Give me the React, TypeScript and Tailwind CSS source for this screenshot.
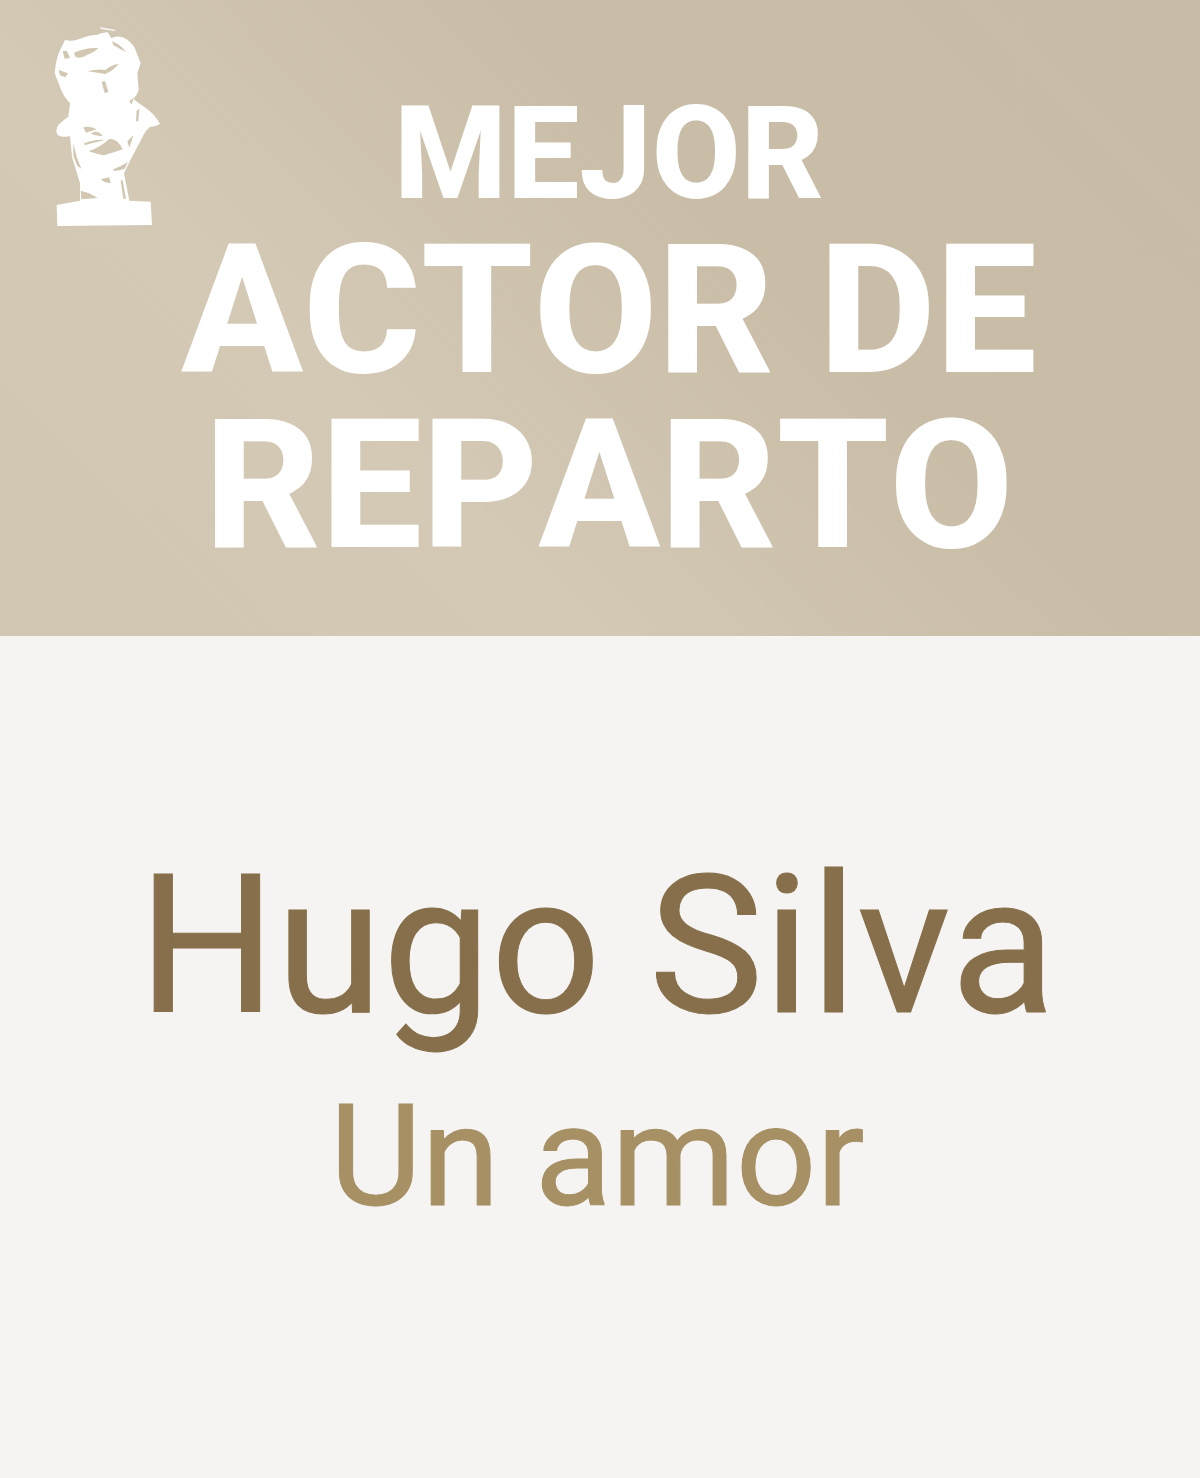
const bustShadows = [
  'M132 128 Q165 112 205 114 Q192 128 172 134 Q152 148 136 140Z',
  'M246 94 Q270 102 288 126 Q268 116 250 106Z',
  'M172 184 Q205 176 226 180 Q246 164 266 162 Q250 182 226 192 Q198 188 172 184Z',
  'M98 124 L110 122 L120 144 L104 146Z',
  'M86 180 L114 190 L106 202 L90 196Z',
  'M215 216 L225 213 L235 246 L224 249Z',
  'M298 272 L312 264 L304 284Z',
  'M320 302 L328 296 L325 334 L318 334Z',
  'M160 352 Q180 346 200 358 L168 368Z',
  'M182 370 Q202 358 218 378 Q196 380 182 370Z',
  'M162 400 Q198 386 224 390 Q190 398 164 406Z',
  'M176 424 Q215 410 236 388 Q260 382 278 418 Q250 428 222 436 Q198 432 176 424Z',
  'M130 400 L140 440 L154 476 L142 468 L130 438Z',
  'M292 394 L310 376 L298 414Z',
  'M250 478 Q272 470 294 456 L284 476 Q264 484 250 482Z',
  'M212 508 L238 502 L242 520 L224 516Z',
  'M152 542 Q180 548 202 564 L154 568Z',
  'M272 512 L278 510 L288 566 L280 566Z',
]

const Bust = () => (
  <svg className="absolute left-[30px] top-[10px] w-[150px] h-[230px]" viewBox="0 0 450 690">
    <path
      fill="#fff"
      d="M105 90 Q128 96 150 86 Q180 74 205 74 L222 68 L240 86 Q268 72 290 88 Q312 104 318 124 L332 160 L322 190 L326 240 Q322 256 310 266 Q326 280 344 292 Q374 312 390 342 Q372 352 360 350 Q348 360 340 376 L330 396 L306 440 L282 490 L298 572 L362 575 L366 645 L82 648 L80 585 L150 572 L150 520 L126 440 L120 378 Q100 384 84 376 Q74 364 85 345 Q100 330 115 320 L120 280 Q100 258 92 236 L74 190 Q78 150 86 130Z"
    />
    <path fill="#fff" d="M210 52 L256 60 L254 63 L212 56Z M205 72 L232 66 L246 88 L234 92Z" />
    {bustShadows.map((d) => (
      <path key={d} d={d} fill="#d2c7b2" />
    ))}
  </svg>
)

export default function App() {
  return (
    <div className="w-[1200px] h-[1478px] flex flex-col font-['Roboto',sans-serif] [font-kerning:none] overflow-hidden">
      {/* Header */}
      <header className="relative h-[636px] shrink-0 bg-[linear-gradient(45deg,#d1c6b2_0%,#d4c9b5_32%,#c9bda7_62%,#c8bca6_100%)] flex flex-col items-center pt-[84px] pl-[18px] text-white font-extrabold text-center">
        <Bust />
        <div className="text-[129px] leading-[140px]">MEJOR</div>
        <div className="text-[180px] leading-[174px]">ACTOR DE</div>
        <div className="text-[180px] leading-[174px] mt-[1px]">REPARTO</div>
      </header>
      {/* Winner */}
      <main className="flex-1 bg-[#f5f4f2] flex flex-col items-center pt-[200px] pr-[6px] text-center [-webkit-text-stroke:1px_currentColor]">
        <div className="text-[193px] leading-[220px] text-[#866f4a]">Hugo Silva</div>
        <div className="text-[141.5px] leading-[164px] text-[#a69064] mt-[19px]">Un amor</div>
      </main>
    </div>
  )
}
